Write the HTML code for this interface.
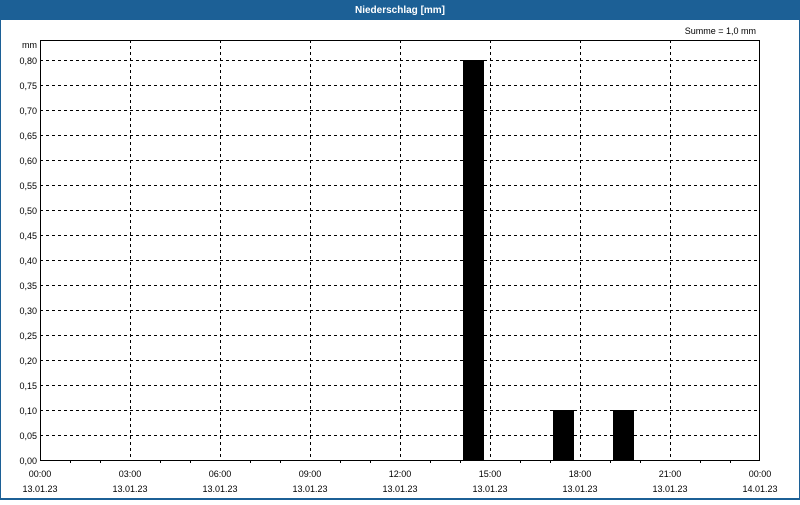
<!DOCTYPE html>
<html><head><meta charset="utf-8"><style>
body{margin:0;width:800px;height:500px;overflow:hidden;background:#fff;font-family:"Liberation Sans",sans-serif}
</style></head><body>
<svg width="800" height="500" xmlns="http://www.w3.org/2000/svg" font-family="Liberation Sans, sans-serif" font-size="9">
<rect x="0" y="0" width="800" height="500" fill="#fff"/>
<rect x="0" y="0" width="800" height="20" fill="#1c6096"/>
<rect x="0" y="0" width="1" height="500" fill="#1c6096"/>
<rect x="799" y="0" width="1" height="500" fill="#1c6096"/>
<rect x="0" y="498" width="800" height="2" fill="#1c6096"/>
<text x="400" y="13" fill="#fff" font-weight="bold" font-size="10" text-anchor="middle">Niederschlag [mm]</text>
<text x="756" y="34" text-anchor="end">Summe = 1,0 mm</text>
<text x="37" y="48" text-anchor="end">mm</text>
<g stroke="#000" stroke-dasharray="3,3" stroke-width="1">
<line x1="40" y1="60.5" x2="760" y2="60.5"/><line x1="40" y1="85.5" x2="760" y2="85.5"/><line x1="40" y1="110.5" x2="760" y2="110.5"/><line x1="40" y1="135.5" x2="760" y2="135.5"/><line x1="40" y1="160.5" x2="760" y2="160.5"/><line x1="40" y1="185.5" x2="760" y2="185.5"/><line x1="40" y1="210.5" x2="760" y2="210.5"/><line x1="40" y1="235.5" x2="760" y2="235.5"/><line x1="40" y1="260.5" x2="760" y2="260.5"/><line x1="40" y1="285.5" x2="760" y2="285.5"/><line x1="40" y1="310.5" x2="760" y2="310.5"/><line x1="40" y1="335.5" x2="760" y2="335.5"/><line x1="40" y1="360.5" x2="760" y2="360.5"/><line x1="40" y1="385.5" x2="760" y2="385.5"/><line x1="40" y1="410.5" x2="760" y2="410.5"/><line x1="40" y1="435.5" x2="760" y2="435.5"/>
<line x1="130.5" y1="40" x2="130.5" y2="460"/><line x1="220.5" y1="40" x2="220.5" y2="460"/><line x1="310.5" y1="40" x2="310.5" y2="460"/><line x1="400.5" y1="40" x2="400.5" y2="460"/><line x1="490.5" y1="40" x2="490.5" y2="460"/><line x1="580.5" y1="40" x2="580.5" y2="460"/><line x1="670.5" y1="40" x2="670.5" y2="460"/>
</g>
<rect x="463" y="60" width="21" height="400" fill="#000"/>
<rect x="553" y="410" width="21" height="50" fill="#000"/>
<rect x="613" y="410" width="21" height="50" fill="#000"/>
<rect x="40.5" y="40.5" width="719" height="420" fill="none" stroke="#000"/>
<g stroke="#000">
<line x1="70.5" y1="460" x2="70.5" y2="463"/><line x1="100.5" y1="460" x2="100.5" y2="463"/><line x1="160.5" y1="460" x2="160.5" y2="463"/><line x1="190.5" y1="460" x2="190.5" y2="463"/><line x1="250.5" y1="460" x2="250.5" y2="463"/><line x1="280.5" y1="460" x2="280.5" y2="463"/><line x1="340.5" y1="460" x2="340.5" y2="463"/><line x1="370.5" y1="460" x2="370.5" y2="463"/><line x1="430.5" y1="460" x2="430.5" y2="463"/><line x1="460.5" y1="460" x2="460.5" y2="463"/><line x1="520.5" y1="460" x2="520.5" y2="463"/><line x1="550.5" y1="460" x2="550.5" y2="463"/><line x1="610.5" y1="460" x2="610.5" y2="463"/><line x1="640.5" y1="460" x2="640.5" y2="463"/><line x1="700.5" y1="460" x2="700.5" y2="463"/><line x1="730.5" y1="460" x2="730.5" y2="463"/>
</g>
<g text-anchor="end">
<text x="37" y="64">0,80</text><text x="37" y="89">0,75</text><text x="37" y="114">0,70</text><text x="37" y="139">0,65</text><text x="37" y="164">0,60</text><text x="37" y="189">0,55</text><text x="37" y="214">0,50</text><text x="37" y="239">0,45</text><text x="37" y="264">0,40</text><text x="37" y="289">0,35</text><text x="37" y="314">0,30</text><text x="37" y="339">0,25</text><text x="37" y="364">0,20</text><text x="37" y="389">0,15</text><text x="37" y="414">0,10</text><text x="37" y="439">0,05</text><text x="37" y="464">0,00</text>
</g>
<g text-anchor="middle">
<text x="40" y="477">00:00</text><text x="40" y="492">13.01.23</text>
<text x="130" y="477">03:00</text><text x="130" y="492">13.01.23</text>
<text x="220" y="477">06:00</text><text x="220" y="492">13.01.23</text>
<text x="310" y="477">09:00</text><text x="310" y="492">13.01.23</text>
<text x="400" y="477">12:00</text><text x="400" y="492">13.01.23</text>
<text x="490" y="477">15:00</text><text x="490" y="492">13.01.23</text>
<text x="580" y="477">18:00</text><text x="580" y="492">13.01.23</text>
<text x="670" y="477">21:00</text><text x="670" y="492">13.01.23</text>
<text x="760" y="477">00:00</text><text x="760" y="492">14.01.23</text>
</g>
</svg>
</body></html>
